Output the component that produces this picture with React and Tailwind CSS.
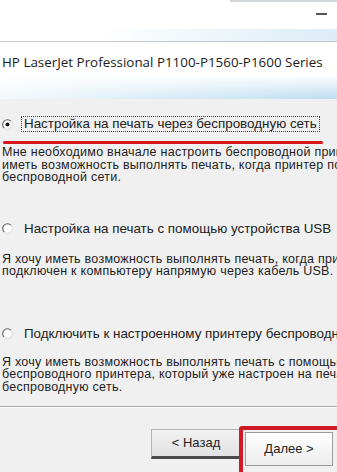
function Radio({ checked }) {
  return (
    <svg width="11" height="11" viewBox="0 0 11 11" className="shrink-0">
      <circle cx="5.5" cy="5.5" r="4.8" fill="#fff" stroke="#d8d8d8" strokeWidth="1" />
      <path d="M8.9 2.1 A4.8 4.8 0 1 0 2.1 8.9" fill="none" stroke="#6a6a6a" strokeWidth="1.1" />
      {checked && <circle cx="5.5" cy="5.5" r="2" fill="#111" />}
    </svg>
  );
}

function Desc({ lines }) {
  return (
    <div className="text-[12.5px] leading-[12.5px] tracking-[0.25px] text-[#1e1e1e] pl-[2px]">
      {lines.map((l, i) => (
        <div key={i} className="whitespace-nowrap">
          {l}
        </div>
      ))}
    </div>
  );
}

export default function App() {
  return (
    <div
      className="w-[337px] h-[472px] overflow-hidden bg-[#f0f0f0] text-[#222]"
      style={{ fontFamily: '"Liberation Sans", Arial, sans-serif' }}
    >
      {/* Window top */}
      <div className="relative h-[42px] bg-white border-b border-[#c4c8cc]">
        <div className="absolute top-0 right-0 w-[107px] h-[2px] bg-[#d4d7da]" />
        <div className="absolute top-[13px] right-[10px] w-[11px] h-[2px] bg-[#555]" />
        <div className="absolute bottom-0 right-0 w-[240px] h-[12px] bg-[linear-gradient(to_right,rgba(255,255,255,0),#dcecf6)]" />
      </div>

      {/* Header band */}
      <div className="relative h-[57px] bg-white">
        <div
          className="pt-[12px] pl-[2px] text-[13.4px] leading-[16px] text-[#1a1a1a] whitespace-nowrap"
          style={{ fontFamily: '"Open Sans", "Noto Sans", sans-serif' }}
        >
          HP LaserJet Professional P1100-P1560-P1600 Series
        </div>
        <div className="absolute bottom-0 left-0 right-0 h-[24px] bg-[linear-gradient(to_bottom,rgba(255,255,255,1),rgba(255,255,255,0)),linear-gradient(to_right,#f4f9fc,#bcdcf0)]" />
      </div>

      {/* Options */}
      <div className="pt-[17px]">
        <div className="flex items-center h-[16px] pl-[2px] gap-[8px]">
          <Radio checked />
          <span className="border border-dotted border-[#444] px-[2px] h-[16px] leading-[14px] text-[13.4px] text-[#222] whitespace-nowrap">
            Настройка на печать через беспроводную сеть
          </span>
        </div>
        <div className="mt-[9px] ml-[3px] w-[320px] h-[3px] rounded-full bg-[#d7141c]" />
        <div className="mt-[2px]">
          <Desc
            lines={[
              "Мне необходимо вначале настроить беспроводной принтер, так как я хочу",
              "иметь возможность выполнять печать, когда принтер подключен к",
              "беспроводной сети.",
            ]}
          />
        </div>

        <div className="mt-[37px] flex items-center h-[16px] pl-[2px] gap-[11px]">
          <Radio />
          <span className="text-[13.4px] leading-[16px] whitespace-nowrap">
            Настройка на печать с помощью устройства USB
          </span>
        </div>
        <div className="mt-[16px]">
          <Desc
            lines={[
              "Я хочу иметь возможность выполнять печать, когда принтер",
              "подключен к компьютеру напрямую через кабель USB.",
            ]}
          />
        </div>

        <div className="mt-[48px] flex items-center h-[16px] pl-[2px] gap-[11px]">
          <Radio />
          <span className="text-[13.4px] leading-[16px] whitespace-nowrap">
            Подключить к настроенному принтеру беспроводной сети
          </span>
        </div>
        <div className="mt-[14px]">
          <Desc
            lines={[
              "Я хочу иметь возможность выполнять печать с помощью",
              "беспроводного принтера, который уже настроен на печать через",
              "беспроводную сеть.",
            ]}
          />
        </div>
      </div>

      {/* Separator */}
      <div className="mt-[13px] h-[2px] border-t border-[#a8a8a8] border-b-white border-b" />

      {/* Buttons */}
      <div className="flex justify-end items-start pt-[18px]">
        <div className="mt-[3px] mr-[-2px]">
          <button className="w-[90px] h-[30px] border border-[#b4b4b4] border-b-[3px] border-b-[#4a4a4a] bg-[linear-gradient(to_bottom,#f2f2f2,#e2e2e2)] text-[13px] text-[#222]">
            &lt; Назад
          </button>
        </div>
        <div className="mr-[-12px] border-[4px] border-[#cf1a26] rounded-[3px] p-[2px] pr-[12px] h-[52px]">
          <button className="w-[88px] h-[34px] border border-[#9a9a9a] bg-[linear-gradient(to_bottom,#ffffff,#ececec)] text-[13px] text-[#222]">
            Далее &gt;
          </button>
        </div>
      </div>
    </div>
  );
}
